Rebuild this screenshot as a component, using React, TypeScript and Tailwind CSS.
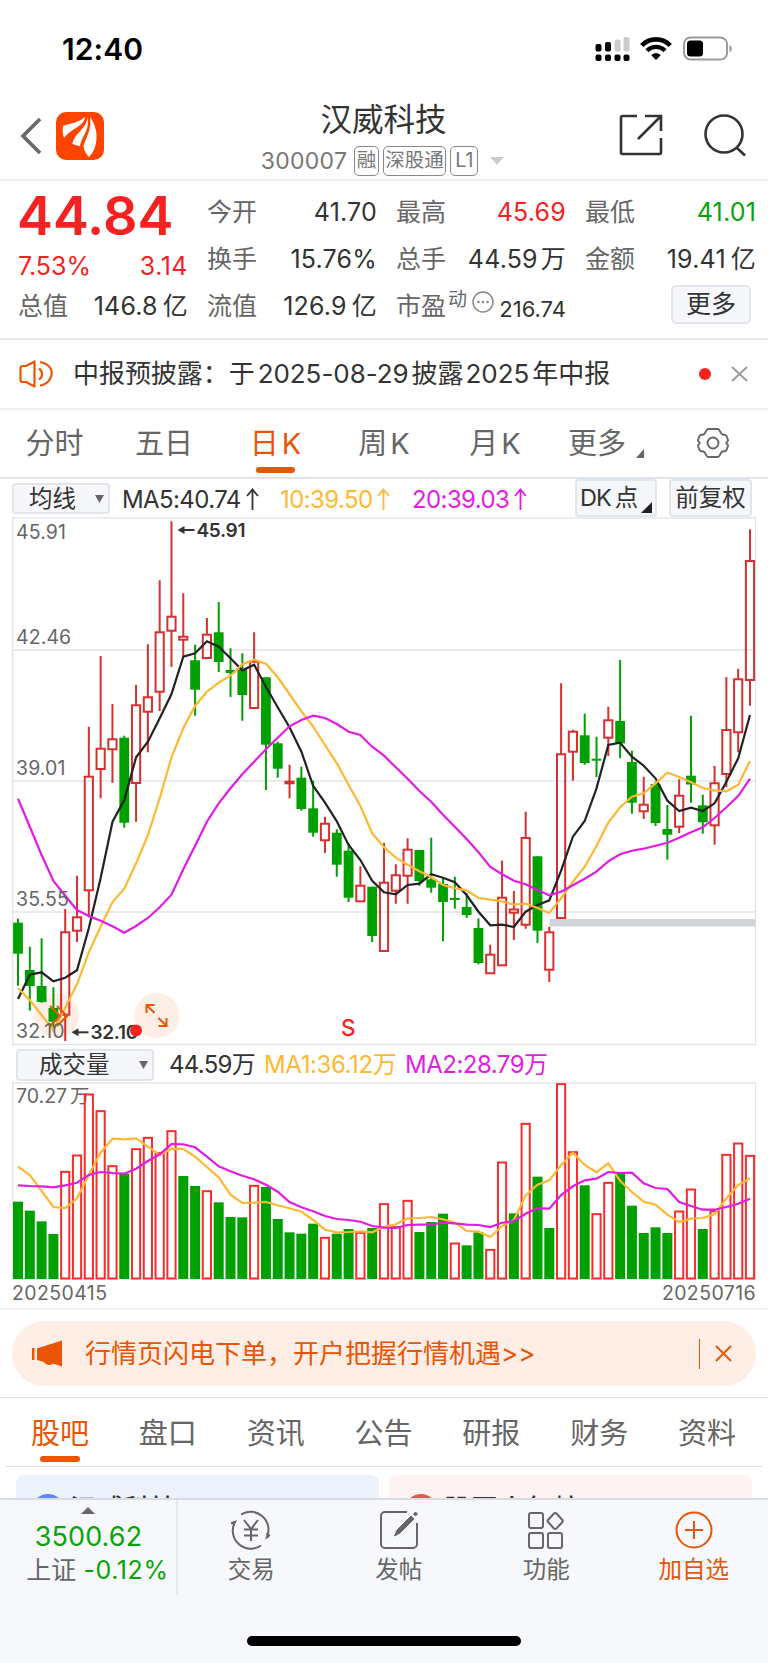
import type { ReactNode } from "react";
import clsx from "clsx";

// [direction, high, body top, body bottom, low]
type Candle = ["u" | "d", number, number, number, number];

const candles: Candle[] = [
  ["d", 918.7, 922.7, 953.7, 985.7],
  ["d", 946.7, 970, 986, 1010.7],
  ["d", 938.3, 986, 1002, 1002.7],
  ["d", 987.3, 1008, 1021.7, 1031],
  ["u", 909, 932.3, 1014.7, 1041],
  ["u", 875.7, 917.3, 930.7, 942],
  ["u", 726.7, 776.7, 890.3, 917.3],
  ["u", 656, 748.7, 769, 798.3],
  ["u", 704, 739.3, 749.3, 782.7],
  ["d", 735.7, 737.7, 822.7, 827.7],
  ["u", 685, 705.3, 783, 821.7],
  ["u", 644.3, 697.3, 711.7, 752.3],
  ["u", 580.3, 632.3, 691.7, 711],
  ["u", 521.3, 616.7, 630.7, 667],
  ["u", 593.3, 636.7, 639.7, 656.7],
  ["d", 644.7, 660.3, 689.7, 715.7],
  ["u", 618, 634.7, 658, 659.3],
  ["d", 602, 632.3, 662, 672],
  ["d", 648.3, 670, 673, 697],
  ["d", 653.3, 669.3, 695, 720.7],
  ["u", 632.3, 661.7, 708, 709.3],
  ["d", 677.3, 677.3, 744.7, 790],
  ["d", 741.7, 743.3, 768.7, 777.7],
  ["u", 764.7, 781.7, 783.3, 798.3],
  ["d", 766.7, 777.7, 809, 810.7],
  ["d", 780.7, 808.3, 832.7, 836.7],
  ["u", 816.7, 823.7, 840.3, 853],
  ["d", 829.3, 832.7, 864.7, 876.7],
  ["d", 843.3, 850.7, 897.7, 902],
  ["u", 866.3, 885.7, 901.3, 901.3],
  ["d", 886.7, 886.7, 936, 942],
  ["u", 843, 882.7, 951, 951],
  ["u", 864.3, 875.3, 890.7, 903.7],
  ["u", 838.3, 849.7, 875.7, 903.7],
  ["d", 850, 850, 881, 885.7],
  ["d", 837.7, 879.3, 887.7, 892.7],
  ["d", 878.3, 884, 902, 941.3],
  ["d", 876.7, 898, 899.3, 908.7],
  ["d", 893.3, 907, 915, 918],
  ["d", 918.3, 928, 963, 964.3],
  ["u", 944.7, 954.7, 973.3, 973.3],
  ["u", 860.7, 897.7, 965.3, 965.3],
  ["u", 891, 909.5, 912.7, 940],
  ["u", 811.7, 838, 924.7, 928.7],
  ["d", 856.3, 856.3, 930.7, 943],
  ["u", 926.7, 932.3, 969.7, 982],
  ["u", 683.3, 754.3, 918, 918],
  ["u", 729.7, 731.7, 751.7, 780.7],
  ["d", 713.7, 735.3, 763, 764.7],
  ["d", 736.7, 758.7, 760, 777],
  ["u", 706.7, 720.3, 737.7, 756],
  ["d", 660, 721, 743.3, 758.3],
  ["d", 750.7, 762, 802.7, 813.7],
  ["u", 776.7, 804.7, 811.3, 819],
  ["d", 781.7, 784, 823, 826],
  ["d", 805, 829, 834.7, 859.7],
  ["u", 779.3, 795.7, 826.7, 833.3],
  ["d", 715.7, 775.7, 784.5, 802.7],
  ["d", 794.7, 805.3, 822.3, 833.7],
  ["u", 766, 783.3, 825.3, 844.7],
  ["u", 677, 730, 774, 787],
  ["u", 668.7, 679.3, 732.3, 752.3],
  ["u", 529.3, 561, 680, 705.7],
];

const ma5 = [
  999, 974.7, 972.3, 981.3, 977.7, 970.3, 928.3, 878.3, 821.7, 800, 757.3, 741.7, 718.3, 694, 656.7, 653.3,
  641.3, 646.7, 658.3, 670.3, 664.7, 686.7, 707.3, 727.3, 751.7, 786, 802.7, 821.3, 845, 860, 880.7, 892.3,
  894.3, 885, 883.7, 874.3, 877.7, 882.3, 895, 911.7, 925.3, 924.7, 927, 911.7, 905, 900.3, 870.7, 836.7,
  821, 788.3, 745, 742.7, 756.7, 765.7, 778.3, 800.7, 811, 807.7, 811, 803.3, 781.7, 758.3, 715,
];

const ma10 = [
  988.3, 1000, 1015, 1030, 1007.7, 984.3, 952.3, 926.7, 902, 888.7, 863.3, 835, 798.3, 757.3, 728.3, 705.7,
  691.7, 682.7, 675.7, 664.3, 659.7, 663.7, 677.3, 694, 711.3, 726.7, 745, 763.3, 785, 806, 833.3, 847.3,
  857.7, 864.7, 871.3, 877, 885, 888.3, 890.3, 898, 899.7, 901.3, 904.7, 903.7, 908, 913, 898.3, 881.7,
  866.7, 846, 822.7, 807.3, 796.7, 793.3, 783.3, 772.7, 777, 782.3, 788, 790.3, 791.3, 784.7, 761,
];

const ma20 = [
  798.7, 826.7, 855, 881, 895.7, 910, 916, 920.7, 926.3, 932.7, 926, 918, 907.3, 894.7, 869.3, 845.7,
  821.7, 803.3, 788.3, 774.3, 761.7, 749.3, 737.7, 726.3, 720, 715.7, 718, 724, 731.7, 735, 746.7, 755.7,
  767.3, 778.7, 791, 801.7, 814.7, 826.7, 839, 852.3, 867, 874.3, 880.7, 884.3, 890, 895.3, 891.7, 885.3,
  878.7, 871.7, 861.3, 854.3, 850.7, 848.7, 845.7, 842.7, 837.7, 832.3, 827.3, 818, 807.3, 796, 778.7,
];

const volumes = [
  485, 512, 544, 582, 394, 345, 162, 212, 377, 401, 326, 292, 338, 272, 408, 438, 452, 487, 531, 532, 436,
  441, 537, 577, 581, 551, 592, 581, 567, 577, 564, 491, 560, 481, 576, 546, 521, 609, 616, 577, 628, 366,
  520, 250, 410, 564, 131, 335, 436, 521, 427, 399, 497, 579, 562, 579, 513, 447, 567, 512, 343, 309, 346,
];

// coloured by close against the previous close, so not always the candle's own colour
const volumeUp = [
  4, 5, 6, 7, 8, 10, 11, 12, 13, 16, 20, 26, 29, 31, 32, 33, 37, 40, 41, 43, 46, 47, 49, 50, 56, 57, 59, 60, 61, 62,
];

const volMa1 = [
  380, 405, 453, 501, 504, 475, 405, 338, 296, 298, 295, 320, 345, 326, 327, 350, 381, 412, 464, 489, 488,
  486, 496, 505, 515, 540, 569, 577, 576, 574, 577, 560, 553, 535, 534, 531, 538, 548, 573, 575, 591, 558,
  540, 466, 434, 421, 375, 338, 375, 397, 370, 422, 456, 485, 494, 524, 546, 536, 534, 523, 475, 435, 415,
];

const volMa2 = [
  436, 438, 439, 442, 436, 428, 405, 396, 399, 401, 386, 363, 343, 312, 313, 322, 350, 379, 394, 407, 418,
  434, 455, 486, 502, 514, 528, 537, 540, 545, 558, 563, 564, 555, 554, 554, 548, 550, 554, 555, 561, 548,
  543, 521, 505, 506, 465, 439, 421, 416, 396, 399, 398, 430, 444, 447, 486, 498, 509, 509, 501, 491, 476,
];

const STEP = 732 / 62;
const cx = (i: number) => 18 + i * STEP;
// volume values are thirds of a pixel
const volY = (v: number) => v / 3;
const toPoints = (values: number[]) => values.map((y, i) => `${cx(i).toFixed(1)},${y.toFixed(1)}`).join(" ");

const RED = "#d63031";
const GREEN = "#00a000";

function StatusBar() {
  return (
    <div className="h-[93px] flex items-center pl-[62px] pr-[36px] pt-[4px]">
      <span className="text-[30px] font-semibold text-black leading-none tracking-[0.1px]">12:40</span>
      <div className="ml-auto flex items-center">
        <svg width="35" height="26" viewBox="0 0 35 26">
          <rect x="0.5" y="8" width="6" height="7.500" rx="2" />
          <rect x="10" y="6" width="6" height="9.500" rx="2" />
          <rect x="19.500" y="3.500" width="6" height="12" rx="2" fill="#ccc" />
          <rect x="28.500" y="1" width="6" height="14.500" rx="2" fill="#ccc" />
          {[0.5, 10, 19.5, 28.5].map((x) => (
            <rect key={x} x={x} y="18.500" width="6" height="6.500" rx="2" />
          ))}
        </svg>
        <svg className="ml-[10px] mr-[11px]" width="32" height="25" viewBox="0 0 32 25" fill="none" stroke="#000">
          <path d="M1.800 9.500C9.500 1.300 22.500 1.300 30.200 9.500" strokeWidth="4.600" />
          <path d="M7 14.800C12 9.600 20 9.600 25 14.800" strokeWidth="4.400" />
          <path d="M16 24l-4.700-4.800c2.600-2.500 6.800-2.500 9.400 0z" fill="#000" stroke="none" />
        </svg>
        <svg width="49" height="25" viewBox="0 0 49 25">
          <rect x="1" y="1.500" width="43" height="22" rx="6.500" fill="none" stroke="#9b9b9b" strokeWidth="2" />
          <rect x="4" y="4.500" width="16" height="16" rx="3.500" />
          <path d="M46.500 9c3 1.300 3 6 0 7.500z" fill="#9b9b9b" />
        </svg>
      </div>
    </div>
  );
}

function Tag({ children, className }: { children: ReactNode; className?: string }) {
  return (
    <span
      className={clsx(
        "h-[30px] px-[1.5px] border-[1.5px] border-[#888] rounded-[5px] text-[19.5px] leading-none flex items-center justify-center",
        className
      )}
    >
      {children}
    </span>
  );
}

function Header() {
  return (
    <header className="h-[88px] border-b-2 border-[#eee] flex items-center justify-between pl-[20px] pr-[21px]">
      <div className="flex items-center gap-[14px] w-[160px] pb-[1px]">
        <svg width="22" height="38" viewBox="0 0 22 38" fill="none" stroke="#666" strokeWidth="3.600">
          <path d="M20 2L3 19l17 17" />
        </svg>
        <svg width="48" height="48" viewBox="0 0 48 48">
          <rect width="48" height="48" rx="10" fill="#ff4400" />
          <path d="M7 14C14 11.500 23 10.500 29 5C28.500 14 16 16 8 26C6.500 22 6.500 18 7 14z" fill="#fff" />
          <path d="M31 4.500C33 15 18 21 16.500 32L24 34.500C25 25 35 17 31 4.500z" fill="#fff" />
          <path d="M34 5C39 12 42 21 40 31C38.500 38 36 42 33 45C30.500 42 28 39 27.500 34C30 25 36 18 34 5z" fill="#fff" />
        </svg>
      </div>
      <div className="self-start flex flex-col items-center pt-[8px]">
        <h1 className="text-[31.500px] leading-[38px] text-[#333]">汉威科技</h1>
        <div className="flex items-center gap-[4px] text-[#777] mt-[7px] pr-[2px]">
          <span className="text-[23px] leading-none mr-[3px] tracking-[0.3px]">300007</span>
          <Tag>融</Tag>
          <Tag>深股通</Tag>
          <Tag className="w-[28px]">L1</Tag>
          <svg className="ml-[8px]" width="14" height="8" viewBox="0 0 14 8">
            <path d="M0 0h14L7 8z" fill="#ccc" />
          </svg>
        </div>
      </div>
      <div className="flex items-center justify-end gap-[40px] w-[160px] pb-[2px]">
        <svg width="44" height="44" viewBox="0 0 44 44" fill="none" stroke="#333" strokeWidth="2.600">
          <path d="M18 3H3.500a1.500 1.500 0 0 0-1.500 1.500v35A1.500 1.500 0 0 0 3.500 41h37a1.500 1.500 0 0 0 1.500-1.500V25" />
          <path d="M26 3h16v15M42 3L19 26" />
        </svg>
        <svg width="44" height="44" viewBox="0 0 44 44" fill="none" stroke="#333" strokeWidth="2.600">
          <circle cx="21" cy="21" r="18.500" />
          <path d="M33.500 34.500L42 42.500" />
        </svg>
      </div>
    </header>
  );
}

interface StatProps {
  label: string;
  value: string;
  unit?: string;
  tone?: string;
}

function Stat({ label, value, unit, tone = "text-[#333]" }: StatProps) {
  return (
    <div className="flex items-center justify-between h-[47px]">
      <span className="text-[25px] text-[#666]">{label}</span>
      <span className={clsx("text-[25px] tracking-[0.2px]", tone)}>
        {value}
        {unit && <span className={unit === "亿" ? "ml-[5px]" : "ml-[3px]"}>{unit}</span>}
      </span>
    </div>
  );
}

function Quote() {
  return (
    <section className="h-[159px] border-b-2 border-[#e6e9ec] pl-[18px] pr-[12px] pt-[8px] grid grid-cols-[170px_170px_170px_171px] gap-x-[19px] leading-none">
      <div>
        <div className="h-[54px] -ml-[1px] text-[54px] font-semibold text-[#f52222]">44.84</div>
        <div className="h-[40px] pt-[7px] flex items-center justify-between text-[25px] text-[#f52222]">
          <span>7.53%</span>
          <span className="tracking-[0.5px]">3.14</span>
        </div>
        <Stat label="总值" value="146.8" unit="亿" />
      </div>
      <div>
        <Stat label="今开" value="41.70" />
        <Stat label="换手" value="15.76%" />
        <Stat label="流值" value="126.9" unit="亿" />
      </div>
      <div>
        <Stat label="最高" value="45.69" tone="text-[#f52222]" />
        <Stat label="总手" value="44.59" unit="万" />
        <div className="flex items-center h-[47px] text-[#666]">
          <span className="text-[25px]">市盈</span>
          <span className="text-[19px] ml-[2px] mb-[14px]">动</span>
          <svg className="ml-[5px] mb-[10px]" width="22" height="22" viewBox="0 0 22 22">
            <circle cx="11" cy="11" r="10" fill="none" stroke="#888" strokeWidth="1.500" />
            <circle cx="6.500" cy="11" r="1.300" fill="#888" />
            <circle cx="11" cy="11" r="1.300" fill="#888" />
            <circle cx="15.500" cy="11" r="1.300" fill="#888" />
          </svg>
          <span className="ml-auto mt-[5px] text-[22px] text-[#333]">216.74</span>
        </div>
      </div>
      <div>
        <Stat label="最低" value="41.01" tone="text-[#0aa30a]" />
        <Stat label="金额" value="19.41" unit="亿" />
        <button className="ml-[86px] mt-[2px] w-[80px] h-[39px] border-2 border-[#e2e5ea] bg-[#f6f7fa] rounded-[5px] text-[25px] text-[#333] flex items-center justify-center">
          更多
        </button>
      </div>
    </section>
  );
}

function Notice() {
  return (
    <section className="h-[70px] border-b-2 border-[#eee] flex items-center pl-[19px] pr-[20px] leading-none">
      <svg width="34" height="28" viewBox="0 0 34 28" fill="none" stroke="#ea5504" strokeWidth="2.200">
        <path d="M15.500 1.500v25L7 22H3.500a2 2 0 0 1-2-2V8a2 2 0 0 1 2-2H7z" strokeLinejoin="round" />
        <path d="M20 8.500a6.500 6.500 0 0 1 0 11M21 2c10 2 14.500 9 10 17c-2.300 4-6 6-10 6.700" />
      </svg>
      <p className="ml-[20px] text-[26px] text-[#333] whitespace-nowrap tracking-[-0.05px]">
        中报预披露：于<span className="mx-[3px]">2025-08-29</span>披露<span className="ml-[2px] mr-[3px]">2025</span>年中报
      </p>
      <span className="ml-auto size-[12px] rounded-full bg-[#f52222]" />
      <svg className="ml-[20px]" width="17" height="16" viewBox="0 0 17 16" stroke="#999" strokeWidth="1.800">
        <path d="M1 1l15 14M16 1L1 15" />
      </svg>
    </section>
  );
}

const periods = [
  { label: "分时", width: "w-[109px]" },
  { label: "五日", width: "w-[110px]" },
  { label: "日", suffix: "K", width: "w-[113px]", active: true },
  { label: "周", suffix: "K", width: "w-[104px]" },
  { label: "月", suffix: "K", width: "w-[118px]" },
];

function PeriodTabs() {
  return (
    <nav className="h-[69px] border-b-2 border-[#dfe4e9] flex text-[29px] leading-none text-[#666]">
      {periods.map((tab) => (
        <div key={tab.label} className={clsx("relative flex justify-center gap-[3px] pt-[19px]", tab.width, tab.active && "text-[#ea5504]")}>
          <span>{tab.label}</span>
          {tab.suffix && <span>{tab.suffix}</span>}
          {tab.active && <span className="absolute bottom-[4px] w-[39px] h-[6px] rounded-full bg-[#ea5504]" />}
        </div>
      ))}
      <div className="flex pt-[19px] pl-[14px] w-[143px]">
        更多
        <svg className="ml-[10px] mt-[20px]" width="8" height="9" viewBox="0 0 8 9">
          <path d="M8 0v9H0z" fill="#666" />
        </svg>
      </div>
      <svg className="mt-[17px]" width="32" height="32" viewBox="0 0 32 32" fill="none" stroke="#666" strokeWidth="1.900">
        <path
          d="M11 2h10c2 0 2 4.500 4.500 5.500c2 .8 3-.5 4 1.500l1.500 4c.5 1.500-1.700 1.800-1.700 3s2.200 1.500 1.700 3l-1.500 4c-1 2-2 .7-4 1.500C23 25.500 23 30 21 30H11c-2 0-2-4.500-4.500-5.500c-2-.8-3 .5-4-1.500L1 19c-.5-1.500 1.700-1.800 1.700-3S.5 14.500 1 13l1.500-4c1-2 2-.7 4-1.500C9 6.500 9 2 11 2z"
          strokeLinejoin="round"
        />
        <circle cx="16" cy="16" r="5.500" />
      </svg>
    </nav>
  );
}

function UpArrow() {
  return (
    <svg className="inline-block ml-[5px] align-[-3px]" width="13" height="23" viewBox="0 0 13 23" fill="none" stroke="currentColor" strokeWidth="1.800">
      <path d="M6.500 22V2M1 8l5.500-6.500L12 8" />
    </svg>
  );
}

function AverageBar() {
  return (
    <div className="h-[38px] flex pl-[12px] pr-[16px] leading-none text-[24px] whitespace-nowrap">
      <button className="mt-[4px] w-[98px] h-[31px] border-2 border-[#e2e5ea] bg-[#f6f7fa] rounded-[4px] flex items-center text-[23.500px] text-[#333] pl-[15px] pr-[4px] justify-between">
        均线
        <svg width="9" height="8" viewBox="0 0 9 8">
          <path d="M0 0h9L4.500 8z" fill="#666" />
        </svg>
      </button>
      <span className="ml-[12px] mt-[9px] w-[158px] tracking-[-0.6px] text-[#333]">MA5:40.74<UpArrow /></span>
      <span className="mt-[9px] w-[132px] tracking-[-0.6px] text-[#ffb833]">10:39.50<UpArrow /></span>
      <span className="mt-[9px] tracking-[-0.6px] text-[#e31ce3]">20:39.03<UpArrow /></span>
      <button className="relative ml-auto w-[82px] h-[38px] border-2 border-[#e2e5ea] bg-[#f6f7fa] rounded-[4px] flex items-center text-[23.500px] text-[#333] pl-[3px]">
        <span className="tracking-[-1px]">DK</span>
        <span className="ml-[4px]">点</span>
        <svg className="absolute right-[3px] bottom-[2px]" width="11" height="11" viewBox="0 0 11 11">
          <path d="M11 0v11H0z" fill="#222" />
        </svg>
      </button>
      <button className="ml-[12px] w-[83px] h-[38px] border-2 border-[#e2e5ea] bg-[#f6f7fa] rounded-[4px] flex items-center justify-center text-[23.500px] text-[#333]">
        前复权
      </button>
    </div>
  );
}

const priceLabels: [string, number][] = [
  ["45.91", 539],
  ["42.46", 643.5],
  ["39.01", 774.7],
  ["35.55", 905.7],
  ["32.10", 1037.5],
];

function CandleChart() {
  return (
    <svg className="block ml-[12px]" width="744" height="529" viewBox="12 517 744 529" fill="none">
      <rect x="12.700" y="518" width="743" height="526.500" stroke="#dfe2e6" strokeWidth="1.300" />
      {[650, 781, 912].map((y) => (
        <line key={y} x1="12.700" x2="755.500" y1={y} y2={y} stroke="#e8ecf1" strokeWidth="2" />
      ))}
      <rect x="549.500" y="919" width="206" height="7.500" fill="#d0d4d9" />
      <circle cx="56.500" cy="1015.500" r="22.500" fill="#feeee6" />
      {candles.map(([dir, high, top, bottom, low], i) => {
        const x = cx(i);
        if (dir === "d") {
          return (
            <g key={i} fill={GREEN}>
              <rect x={x - 1} y={high} width="2" height={low - high} />
              <rect x={x - 4.9} y={top} width="9.800" height={Math.max(bottom - top, 2)} />
            </g>
          );
        }
        return (
          <g key={i} stroke={RED} strokeWidth="2">
            <path d={`M${x} ${high}V${top}M${x} ${bottom}V${low}`} />
            <rect x={x - 4.1} y={top} width="8.200" height={bottom - top} />
          </g>
        );
      })}
      <polyline points={toPoints(ma5)} stroke="#222" strokeWidth="2.200" />
      <polyline points={toPoints(ma10)} stroke="#ffb833" strokeWidth="2.200" />
      <polyline points={toPoints(ma20)} stroke="#e31ce3" strokeWidth="2.200" />

      <path d="M50 1006l10 10-10 10M57 1006l10 10-10 10" stroke="#ea5504" strokeWidth="2" />
      <circle cx="157" cy="1015.500" r="22.500" fill="#feeee6" />
      <path d="M146.500 1013v-8h8M147 1005.500l7.500 7.500M166.500 1018v8h-8M166 1025.500l-7.500-7.500" stroke="#ea5504" strokeWidth="2" />

      {priceLabels.map(([label, y]) => (
        <text key={label} x="16" y={y} fontSize="19.500" fill="#666" className="tracking-[0.1px]">
          {label}
        </text>
      ))}

      <g fill="#333" fontSize="19" fontWeight="600">
        <path d="M194.500 530H183" stroke="#333" strokeWidth="2" />
        <path d="M177.500 530l7-4v8z" />
        <text x="196.500" y="537" className="tracking-[-0.3px]">45.91</text>
        <path d="M88.500 1032.300H77" stroke="#333" strokeWidth="2" />
        <path d="M71.500 1032.300l7-4v8z" />
        <text x="90.500" y="1039" className="tracking-[-0.3px]">32.10</text>
      </g>
      <circle cx="136" cy="1030.500" r="6" fill="#f52222" />
      <text x="341" y="1035.500" fontSize="22.500" fontWeight="500" fill="#f52222">S</text>
    </svg>
  );
}

function VolumeBar() {
  return (
    <div className="h-[36px] flex items-center pt-[1px] pl-[16px] text-[24px] leading-none whitespace-nowrap">
      <button className="w-[138px] h-[32px] border-2 border-[#e2e5ea] bg-[#f6f7fa] rounded-[4px] flex items-center justify-between text-[23.500px] text-[#333] pl-[21px] pr-[4px]">
        成交量
        <svg width="9" height="8" viewBox="0 0 9 8">
          <path d="M0 0h9L4.500 8z" fill="#666" />
        </svg>
      </button>
      <span className="ml-[15px] w-[95px] text-[#333] tracking-[-0.7px]">44.59万</span>
      <span className="w-[141px] text-[#ffb833] tracking-[-0.4px]">MA1:36.12万</span>
      <span className="text-[#e31ce3] tracking-[-0.5px]">MA2:28.79万</span>
    </div>
  );
}

function VolumeChart() {
  return (
    <section className="h-[228px] border-b-2 border-[#f0f1f3]">
      <svg className="block ml-[12px]" width="744" height="198" viewBox="12 42 744 198" fill="none">
        <rect x="12.700" y="43" width="743" height="196" stroke="#dfe2e6" strokeWidth="1.300" />
        <text x="16" y="63" fontSize="19.500" fill="#666">
          70.27<tspan dx="3">万</tspan>
        </text>
        {volumes.map((v, i) =>
          volumeUp.includes(i) ? (
            <rect key={i} x={cx(i) - 4.1} y={volY(v) + 0.5} width="8.200" height={238 - volY(v)} stroke="#fa2c2c" strokeWidth="2" />
          ) : (
            <rect key={i} x={cx(i) - 5} y={volY(v)} width="10" height={239 - volY(v)} fill={GREEN} />
          )
        )}
        <polyline points={toPoints(volMa1.map(volY))} stroke="#ffb833" strokeWidth="2.200" />
        <polyline points={toPoints(volMa2.map(volY))} stroke="#e31ce3" strokeWidth="2.200" />
      </svg>
      <div className="flex justify-between px-[12px] pt-[4px] text-[19.500px] leading-none text-[#666] tracking-[0.4px]">
        <span>20250415</span>
        <span>20250716</span>
      </div>
    </section>
  );
}

function Banner() {
  return (
    <section className="h-[88px] border-b border-[#dfdfdf] px-[12px] pt-[11px]">
      <div className="h-[65px] rounded-full bg-[#feeee6] flex items-center pl-[20px] pr-[24px] text-[#ea5504] leading-none">
        <svg width="31" height="27" viewBox="0 0 31 27" fill="currentColor">
          <rect y="8" width="2.500" height="12" />
          <path d="M5 8.500L30 .5V26.500L21 23.500C18.500 26 13.500 25 12 22L5 20z" />
        </svg>
        <span className="ml-[22px] text-[26px] whitespace-nowrap">行情页闪电下单，开户把握行情机遇&gt;&gt;</span>
        <span className="ml-auto w-[1.500px] h-[30px] bg-[#ea5504]" />
        <svg className="ml-[15px]" width="17" height="17" viewBox="0 0 17 17" stroke="currentColor" strokeWidth="1.800">
          <path d="M1 1l15 15M16 1L1 16" />
        </svg>
      </div>
    </section>
  );
}

const infoTabs = ["股吧", "盘口", "资讯", "公告", "研报", "财务", "资料"];

function InfoTabs() {
  return (
    <nav className="h-[69px] mx-[6px] pr-[1px] border-b border-[#dfdfdf] grid grid-cols-7 text-[29px] leading-none text-[#666]">
      {infoTabs.map((tab, i) => (
        <div key={tab} className={clsx("relative flex justify-center pt-[21px]", i === 0 && "text-[#ea5504]")}>
          {tab}
          {i === 0 && <span className="absolute bottom-[4px] w-[40px] h-[6px] rounded-full bg-[#ea5504]" />}
        </div>
      ))}
    </nav>
  );
}

function Cards() {
  return (
    <section className="h-[31px] overflow-hidden grid grid-cols-2 gap-[10px] px-[16px] pt-[8px] text-[26px] font-medium text-[#333] leading-none">
      <div className="h-[100px] rounded-[8px] bg-[#edf2fc] flex items-start pt-[19px] pl-[16px]">
        <span className="size-[32px] rounded-full bg-[#5a86f0]" />
        <span className="ml-[6px] mt-[2px] tracking-[0.8px]">汉威科技</span>
      </div>
      <div className="h-[100px] rounded-[8px] bg-[#fef2f3] flex items-start pt-[19px] pl-[16px]">
        <span className="size-[32px] rounded-full bg-[#e05a54]" />
        <span className="ml-[7px] mt-[2px] tracking-[1.5px]">股票人气榜</span>
      </div>
    </section>
  );
}

function NavItem({ label, active, children }: { label: string; active?: boolean; children: ReactNode }) {
  return (
    <div className={clsx("flex-1 flex flex-col items-center pt-[9px] pr-[1px]", active ? "text-[#ea5504]" : "text-[#666]")}>
      <svg width="42" height="42" viewBox="0 0 42 42" fill="none" stroke="currentColor" strokeWidth="2">
        {children}
      </svg>
      <span className="mt-[7px] text-[23.500px] leading-none">{label}</span>
    </div>
  );
}

function BottomBar() {
  return (
    <footer className="h-[165px] bg-[#f7f8fb] border-t-2 border-[#d9dde3] flex flex-col">
      <div className="flex h-[95px]">
        <div className="w-[178px] border-r-2 border-[#e6e8ec] flex flex-col items-center leading-none pt-[7px]">
          <svg width="14" height="7" viewBox="0 0 14 7">
            <path d="M7 0l7 7H0z" fill="#666" />
          </svg>
          <span className="mt-[9px] pl-[1px] text-[27px] text-[#0aa30a] tracking-[0.1px]">3500.62</span>
          <div className="mt-[8px] ml-[19px] flex items-center gap-[7px] text-[25px] text-[#666] whitespace-nowrap">
            <span>上证</span>
            <span className="text-[#0aa30a] tracking-[0.6px]">-0.12%</span>
          </div>
        </div>
        <NavItem label="交易">
          <path d="M11 5.500A18 18 0 0 1 37 28l3-2M38 29l-1-5M31 36.500A18 18 0 0 1 5 13l-4 1.500M4 12v5" />
          <path d="M14 11l7 9 7-9M21 20v12M14 20.500h14M14 26.500h14" />
        </NavItem>
        <NavItem label="发帖">
          <path d="M29 3H7a4 4 0 0 0-4 4v28a4 4 0 0 0 4 4h28a4 4 0 0 0 4-4V14" />
          <path d="M16.500 27l2.500-6L33 7l3 3-14 14zM35.500 5l2-2 2 2-2 2z" fill="currentColor" strokeWidth="1" />
        </NavItem>
        <NavItem label="功能">
          <rect x="4" y="4" width="14" height="15" rx="2" />
          <rect x="4" y="24" width="14" height="15" rx="2" />
          <rect x="23" y="24" width="14" height="15" rx="2" />
          <path d="M29 4.500a1.500 1.500 0 0 1 2.400 0l6 6.500a1.500 1.500 0 0 1 0 2l-6 6.500a1.500 1.500 0 0 1-2.400 0l-6-6.500a1.500 1.500 0 0 1 0-2z" />
        </NavItem>
        <NavItem label="加自选" active>
          <circle cx="21" cy="21" r="17.500" />
          <path d="M21 12v18M12 21h18" />
        </NavItem>
      </div>
      <div className="mx-auto mt-[41px] w-[274px] h-[10px] rounded-full bg-black" />
    </footer>
  );
}

export default function App() {
  return (
    <div className="w-[768px] h-[1663px] overflow-hidden bg-white font-['Inter','Noto_Sans_CJK_SC',sans-serif]">
      <StatusBar />
      <Header />
      <Quote />
      <Notice />
      <PeriodTabs />
      <AverageBar />
      <CandleChart />
      <VolumeBar />
      <VolumeChart />
      <Banner />
      <InfoTabs />
      <Cards />
      <BottomBar />
    </div>
  );
}
